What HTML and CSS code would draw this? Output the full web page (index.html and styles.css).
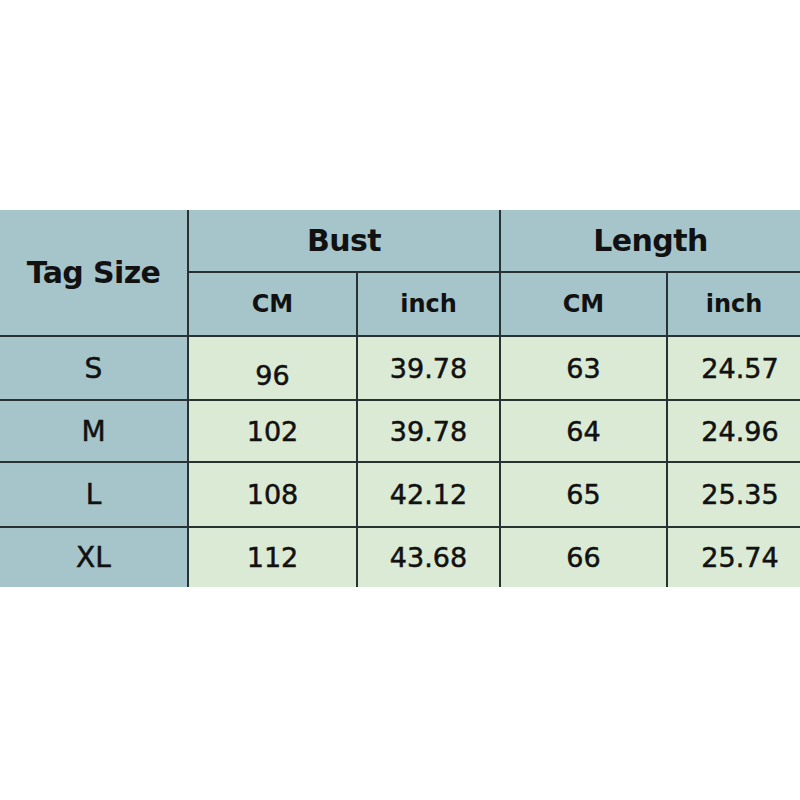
FILE: index.html
```html
<!DOCTYPE html>
<html>
<head>
<meta charset="utf-8">
<link rel="stylesheet" href="styles.css">
</head>
<body>
<div class="page">
  <table class="size-table">
    <colgroup>
      <col class="c-tag"><col class="c-bcm"><col class="c-bin"><col class="c-lcm"><col class="c-lin">
    </colgroup>
    <thead>
      <tr class="r-h1">
        <th rowspan="2" class="tag">Tag Size</th>
        <th colspan="2" class="group">Bust</th>
        <th colspan="2" class="group">Length</th>
      </tr>
      <tr class="r-h2">
        <th class="unit">CM</th>
        <th class="unit">inch</th>
        <th class="unit">CM</th>
        <th class="unit">inch</th>
      </tr>
    </thead>
    <tbody>
      <tr class="r-s">
        <th class="size">S</th>
        <td class="low">96</td>
        <td>39.78</td>
        <td>63</td>
        <td class="last">24.57</td>
      </tr>
      <tr class="r-m">
        <th class="size">M</th>
        <td>102</td>
        <td>39.78</td>
        <td>64</td>
        <td class="last">24.96</td>
      </tr>
      <tr class="r-l">
        <th class="size">L</th>
        <td>108</td>
        <td>42.12</td>
        <td>65</td>
        <td class="last">25.35</td>
      </tr>
      <tr class="r-xl">
        <th class="size">XL</th>
        <td>112</td>
        <td>43.68</td>
        <td>66</td>
        <td class="last">25.74</td>
      </tr>
    </tbody>
  </table>
</div>
</body>
</html>
```

FILE: styles.css
```css
html, body {
  margin: 0;
  padding: 0;
  background: #ffffff;
}

.page {
  width: 800px;
  height: 800px;
  padding-top: 210px;
  box-sizing: border-box;
}

.size-table {
  width: 800px;
  border-collapse: collapse;
  table-layout: fixed;
  color: #111111;
}

.c-tag { width: 188px; }
.c-bcm { width: 169px; }
.c-bin { width: 143px; }
.c-lcm { width: 167px; }
.c-lin { width: 133px; }

.size-table th,
.size-table td {
  border: 2px solid #283232;
  padding: 0;
  text-align: center;
  vertical-align: middle;
}

.size-table tr > :first-child { border-left: none; }
.size-table tr > :last-child { border-right: none; }
.size-table thead tr:first-child > * { border-top: none; }
.size-table tbody tr:last-child > * { border-bottom: none; }

.size-table th {
  background: #a6c5cb;
}

.size-table td {
  background: #dbead4;
  font-family: "DejaVu Sans", sans-serif;
  font-size: 27px;
  font-weight: normal;
  -webkit-text-stroke: 0.5px #111111;
}

.r-h1 { height: 62px; }
.r-h2 { height: 64px; }
.r-s { height: 64px; }
.r-m { height: 62px; }
.r-l { height: 65px; }
.r-xl { height: 60px; }

.tag,
.group {
  font-family: "DejaVu Sans", sans-serif;
  font-weight: bold;
  font-size: 30px;
  letter-spacing: -0.6px;
}

.tag { padding-top: 2px; }
.group { padding-top: 4px; }

.unit {
  font-family: "DejaVu Sans", sans-serif;
  font-weight: bold;
  font-size: 24px;
}

.size {
  font-family: "DejaVu Sans", sans-serif;
  font-weight: normal;
  font-size: 28px;
  -webkit-text-stroke: 0.5px #111111;
}

.size-table td.low { padding-top: 14px; }
.size-table td.last { padding-left: 12px; }
```
